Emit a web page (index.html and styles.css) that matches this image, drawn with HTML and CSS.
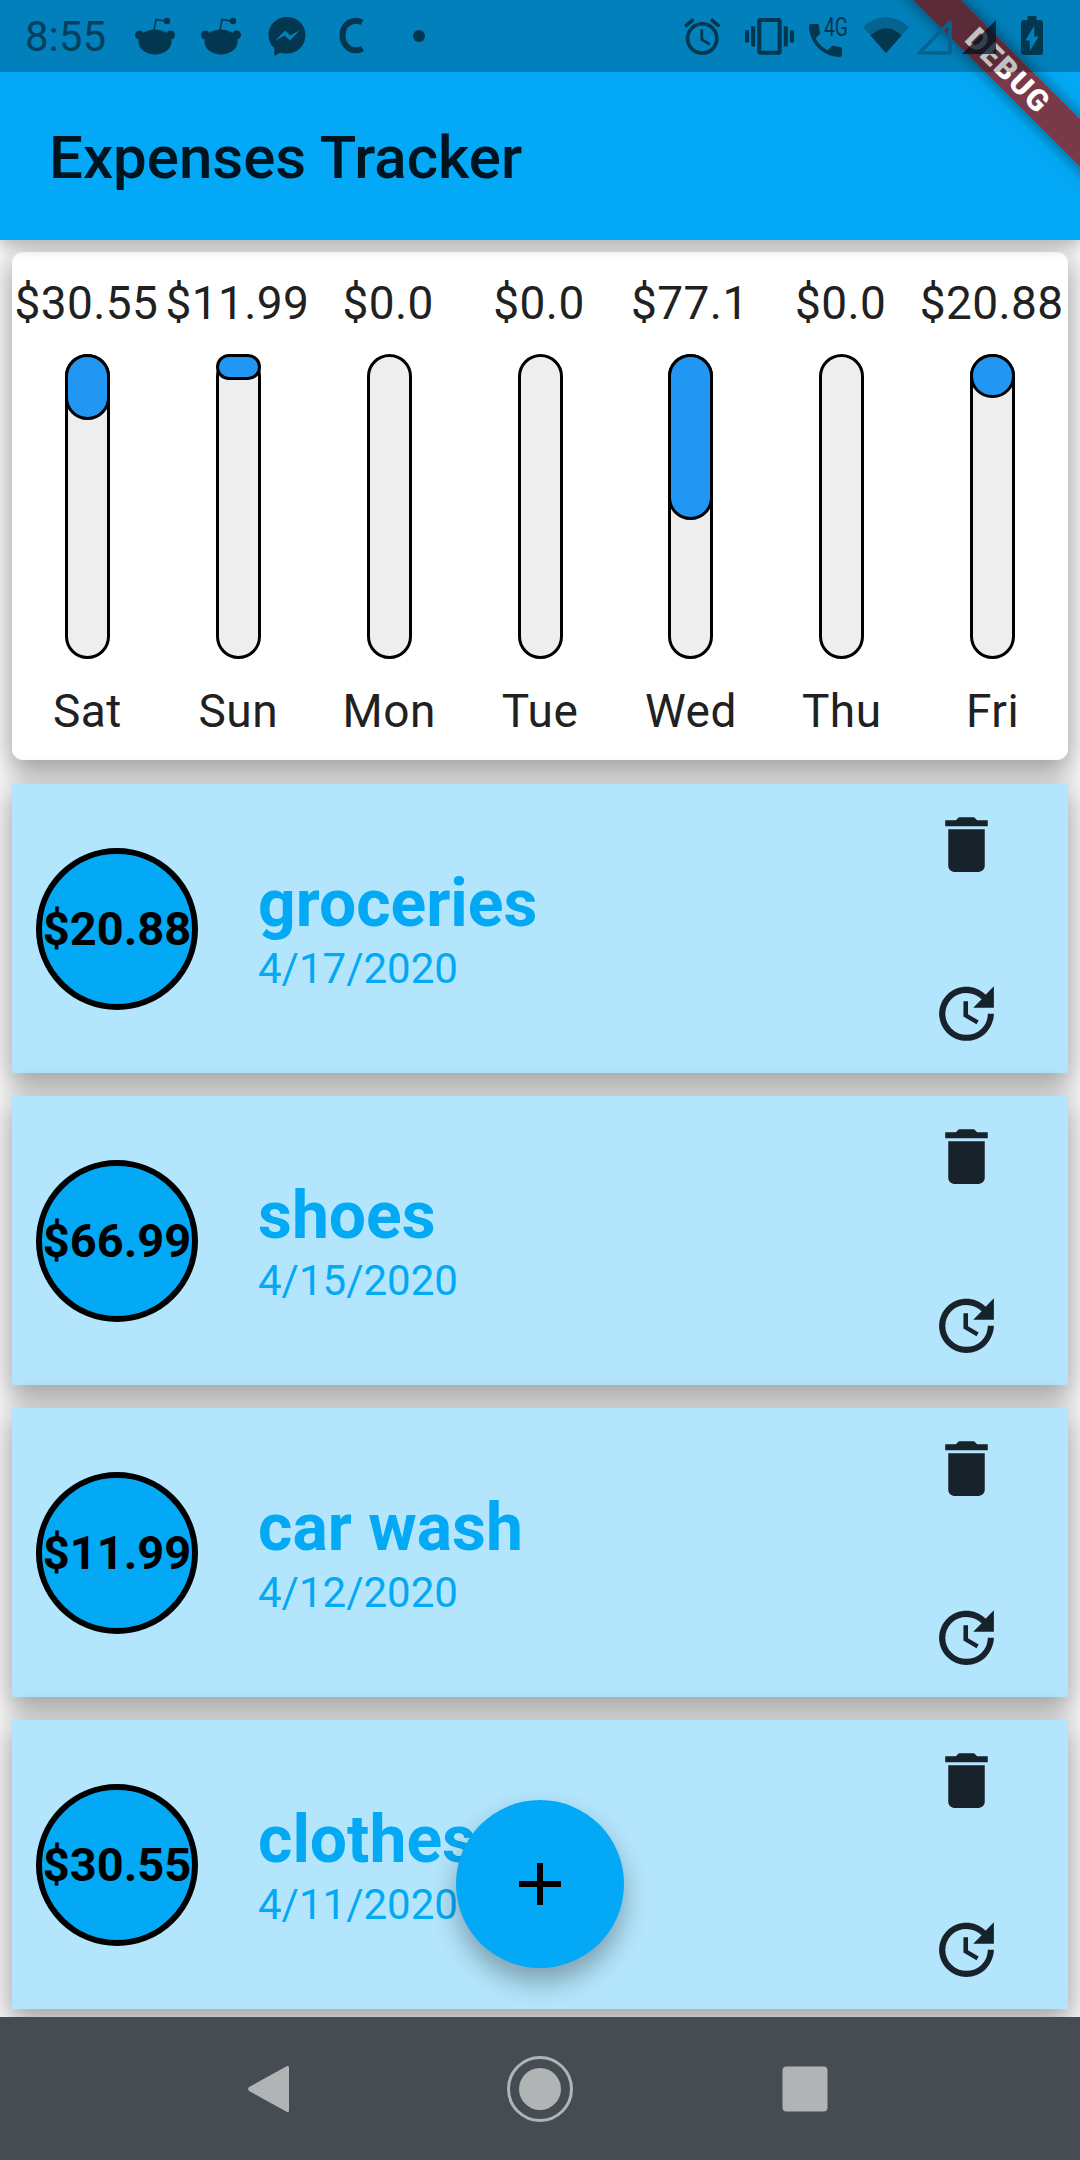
FILE: index.html
```html
<!DOCTYPE html>
<html>
	<head>
		<meta charset="utf-8">
		<meta name="viewport" content="width = device-width, initial-scale = 1.0">
		<title>Expenses Tracker</title>
		<link rel="stylesheet" href="styles.css">
	</head>
	<body>
		<svg class="icon-defs" width="0" height="0">
			<symbol id="icon-delete" viewBox="0 0 24 24">
				<path d="M6 19c0 1.1.9 2 2 2h8c1.1 0 2-.9 2-2V7H6v12zM19 4h-3.5l-1-1h-5l-1 1H5v2h14V4z"></path>
			</symbol>
			<symbol id="icon-update" viewBox="0 0 24 24">
				<path d="M21 10.12h-6.78l2.74-2.82c-2.73-2.7-7.15-2.8-9.88-.1-2.73 2.71-2.73 7.08 0 9.79s7.15 2.71 9.88 0C18.32 15.65 19 14.08 19 12.1h2c0 1.98-.88 4.55-2.64 6.29-3.51 3.48-9.21 3.48-12.72 0-3.5-3.47-3.53-9.11-.02-12.58s9.14-3.47 12.65 0L21 3v7.12zM12.5 8v4.25l3.5 2.08-.72 1.21L11 13V8h1.5z"></path>
			</symbol>
			<symbol id="icon-reddit" viewBox="0 0 40 40">
				<circle cx="4.500" cy="19" r="4.500"></circle>
				<circle cx="35.500" cy="19" r="4.500"></circle>
				<ellipse cx="20" cy="26" rx="16.500" ry="12.500"></ellipse>
				<path d="M19 14l2-10.500 9 1.500" fill="none" stroke="#03374f" stroke-width="1.600"></path>
				<circle cx="32" cy="5" r="3.200"></circle>
			</symbol>
		</svg>
		<div class="screen">
			<div class="debug-banner"><span class="debug-banner__text">DEBUG</span></div>
			<header class="app-bar">
				<div class="status-bar">
					<span class="status-bar__time">8:55</span>
					<svg class="status-slot"><use href="#icon-reddit"></use></svg>
					<svg class="status-slot"><use href="#icon-reddit"></use></svg>
					<svg class="status-slot" viewBox="0 0 40 40">
						<path d="M20 1C9.500 1 1.500 8.700 1.500 19c0 5.400 2.200 10 5.800 13.200V40l6-3.300c2.100.6 4.300.9 6.700.9 10.500 0 18.500-7.900 18.500-18.500S30.500 1 20 1z"></path>
						<path d="M8 25l10-10.500 5.500 5 9.500-5.500-10 10.500-5.500-5z" fill="#0280b8"></path>
					</svg>
					<svg class="status-slot" viewBox="0 0 40 40">
						<path d="M29 6.500C26 4.800 23 4.500 20 5.200 13.500 6.500 9.500 12 9.500 19.500S14 32.500 20 34c3.500.8 6.500.3 9.500-1.500" fill="none" stroke="#03374f" stroke-width="6"></path>
					</svg>
					<svg class="status-slot" viewBox="0 0 40 40"><circle cx="20" cy="20" r="6"></circle></svg>
					<svg class="status-bar__right" viewBox="680 0 400 72">
						<path transform="translate(680.300 14.600) scale(1.830)" d="M22 5.720l-4.600-3.860-1.290 1.530 4.600 3.860L22 5.720zM7.880 3.390L6.600 1.860 2 5.710l1.290 1.530 4.590-3.850zM12.500 8H11v6l4.750 2.850.75-1.230-4-2.370V8zM12 4c-4.970 0-9 4.030-9 9s4.020 9 9 9c4.970 0 9-4.030 9-9s-4.030-9-9-9zm0 16c-3.870 0-7-3.130-7-7s3.130-7 7-7 7 3.130 7 7-3.130 7-7 7z"></path>
						<path transform="translate(745 11.900) scale(2.040)" d="M0 15h2V9H0v6zm3 2h2V7H3v10zm19-8v6h2V9h-2zm-3 8h2V7h-2v10zM16.500 3h-9C6.670 3 6 3.670 6 4.500v15c0 .83.67 1.500 1.500 1.500h9c.83 0 1.500-.67 1.500-1.500v-15c0-.83-.67-1.500-1.500-1.500zM16 19H8V5h8v14z"></path>
						<path transform="translate(803.500 18.500) scale(1.830)" d="M6.620 10.790c1.440 2.830 3.760 5.140 6.590 6.590l2.200-2.200c.27-.27.67-.36 1.020-.24 1.120.37 2.330.57 3.570.57.550 0 1 .45 1 1V20c0 .55-.45 1-1 1-9.390 0-17-7.610-17-17 0-.55.45-1 1-1h3.500c.55 0 1 .45 1 1 0 1.250.2 2.450.57 3.570.11.35.03.74-.25 1.020l-2.200 2.200z"></path>
						<text class="status-bar__net" x="824" y="36" textLength="24" lengthAdjust="spacingAndGlyphs">4G</text>
						<path class="status-bar__dim" d="M863 27Q886 7 909 27L886 53Z"></path>
						<path d="M870.500 35.500Q886 21 901.500 35.500L886 53Z"></path>
						<path class="status-bar__dim-line" d="M950 22V53H919Z"></path>
						<path class="status-bar__over" d="M996 20V54H962Z"></path>
						<path transform="translate(1005.600 12.100) scale(2.200 1.950)" d="M15.670 4H14V2h-4v2H8.330C7.600 4 7 4.600 7 5.330v15.330C7 21.400 7.600 22 8.330 22h7.330c.74 0 1.340-.6 1.340-1.330V5.330C17 4.600 16.400 4 15.670 4zM11 20v-5.500H9L13 7v5.500h2L11 20z"></path>
					</svg>
				</div>
				<h1 class="app-bar__title">Expenses Tracker</h1>
			</header>

			<main class="content">
				<section class="chart">
					<div class="chart__col">
						<div class="chart__value">$30.55</div>
						<div class="bar"><div class="bar__track"></div><div class="bar__fill" style="height: 66px;"></div></div>
						<div class="chart__day">Sat</div>
					</div>
					<div class="chart__col">
						<div class="chart__value">$11.99</div>
						<div class="bar"><div class="bar__track"></div><div class="bar__fill" style="height: 26px;"></div></div>
						<div class="chart__day">Sun</div>
					</div>
					<div class="chart__col">
						<div class="chart__value">$0.0</div>
						<div class="bar"><div class="bar__track"></div></div>
						<div class="chart__day">Mon</div>
					</div>
					<div class="chart__col">
						<div class="chart__value">$0.0</div>
						<div class="bar"><div class="bar__track"></div></div>
						<div class="chart__day">Tue</div>
					</div>
					<div class="chart__col">
						<div class="chart__value">$77.1</div>
						<div class="bar"><div class="bar__track"></div><div class="bar__fill" style="height: 166px;"></div></div>
						<div class="chart__day">Wed</div>
					</div>
					<div class="chart__col">
						<div class="chart__value">$0.0</div>
						<div class="bar"><div class="bar__track"></div></div>
						<div class="chart__day">Thu</div>
					</div>
					<div class="chart__col">
						<div class="chart__value">$20.88</div>
						<div class="bar"><div class="bar__track"></div><div class="bar__fill" style="height: 44px;"></div></div>
						<div class="chart__day">Fri</div>
					</div>
				</section>

				<section class="expense-list">
					<article class="expense">
						<div class="expense__amount">$20.88</div>
						<div class="expense__info">
							<div class="expense__title">groceries</div>
							<div class="expense__date">4/17/2020</div>
						</div>
						<div class="expense__actions">
							<svg class="expense__icon"><use href="#icon-delete"></use></svg>
							<svg class="expense__icon"><use href="#icon-update"></use></svg>
						</div>
					</article>
					<article class="expense">
						<div class="expense__amount">$66.99</div>
						<div class="expense__info">
							<div class="expense__title">shoes</div>
							<div class="expense__date">4/15/2020</div>
						</div>
						<div class="expense__actions">
							<svg class="expense__icon"><use href="#icon-delete"></use></svg>
							<svg class="expense__icon"><use href="#icon-update"></use></svg>
						</div>
					</article>
					<article class="expense">
						<div class="expense__amount">$11.99</div>
						<div class="expense__info">
							<div class="expense__title">car wash</div>
							<div class="expense__date">4/12/2020</div>
						</div>
						<div class="expense__actions">
							<svg class="expense__icon"><use href="#icon-delete"></use></svg>
							<svg class="expense__icon"><use href="#icon-update"></use></svg>
						</div>
					</article>
					<article class="expense">
						<div class="expense__amount">$30.55</div>
						<div class="expense__info">
							<div class="expense__title">clothes</div>
							<div class="expense__date">4/11/2020</div>
						</div>
						<div class="expense__actions">
							<svg class="expense__icon"><use href="#icon-delete"></use></svg>
							<svg class="expense__icon"><use href="#icon-update"></use></svg>
						</div>
					</article>
				</section>
			</main>

			<button class="fab">
				<svg class="fab__icon" viewBox="0 0 24 24"><path d="M19 13h-6v6h-2v-6H5v-2h6V5h2v6h6v2z"></path></svg>
			</button>

			<nav class="nav-bar">
				<svg class="nav-bar__icon" viewBox="0 0 66 66">
					<path d="M47 11.500c0-1.500-1.200-2-2.400-1.200L7.500 30.700c-1.800 1-1.800 3.600 0 4.600l37.100 20.400c1.200.8 2.400.3 2.400-1.200z"></path>
				</svg>
				<svg class="nav-bar__icon" viewBox="0 0 66 66">
					<circle cx="33" cy="33" r="31.500" fill="none" stroke="#b0b4b5" stroke-width="3"></circle>
					<circle cx="33" cy="33" r="21"></circle>
				</svg>
				<svg class="nav-bar__icon" viewBox="0 0 66 66">
					<rect x="10.500" y="10.500" width="45" height="45" rx="4"></rect>
				</svg>
			</nav>
		</div>
	</body>
</html>
```

FILE: styles.css
```css
body {
	margin: 0;
	font-family: Roboto, "Liberation Sans", sans-serif;
}
.icon-defs {
	position: absolute;
}
.screen {
	position: relative;
	width: 1080px;
	height: 2160px;
	display: flex;
	flex-direction: column;
	overflow: hidden;
	background: #fafafa;
}
/* sits under the status bar scrim, above the app bar */
.debug-banner {
	position: absolute;
	left: 838px;
	top: 54px;
	z-index: 2;
	width: 340px;
	height: 34px;
	display: flex;
	align-items: center;
	justify-content: center;
	transform: rotate(45deg);
	background: rgba(150, 30, 30, 0.8);
	box-shadow: 0 0 16px rgba(0, 0, 0, 0.5);
}
.debug-banner__text {
	color: #fff;
	font-size: 30px;
	font-weight: 900;
	letter-spacing: 2px;
	line-height: 1;
}
.app-bar {
	position: relative;
	height: 240px;
	flex: none;
	background: #03a9f6;
	box-shadow: 0 6px 14px rgba(0, 0, 0, 0.25);
}
.app-bar__title {
	margin: 0;
	padding: 2px 0 0 49px;
	height: 168px;
	line-height: 168px;
	font-size: 60px;
	font-weight: 500;
	color: #00141f;
}
.status-bar {
	position: relative;
	z-index: 3;
	height: 72px;
	display: flex;
	align-items: center;
	padding-left: 25px;
	background: rgba(0, 0, 0, 0.24);
	fill: #03374f;
}
.status-bar__time {
	width: 110px;
	font-size: 42px;
	color: #03405f;
}
.status-slot {
	width: 40px;
	height: 40px;
	margin-right: 26px;
}
.status-bar__right {
	position: absolute;
	right: 0;
	top: 0;
	width: 400px;
	height: 72px;
}
.status-bar__net {
	font-size: 25px;
	font-family: Roboto, sans-serif;
}
.status-bar__dim {
	fill: #02648f;
}
.status-bar__dim-line {
	fill: none;
	stroke: #02648f;
	stroke-width: 3.5;
	stroke-linejoin: round;
}
.status-bar__over {
	fill: rgba(0, 15, 30, 0.72);
}
.content {
	flex: 1;
	display: flex;
	flex-direction: column;
	gap: 24px;
	padding: 12px 12px 0;
	overflow: hidden;
}
.chart {
	height: 508px;
	flex: none;
	display: flex;
	box-sizing: border-box;
	border-radius: 11px;
	background: #fff;
	box-shadow: 0 14px 24px rgba(0, 0, 0, 0.25), 0 0 28px 6px rgba(0, 0, 0, 0.14);
}
.chart__col {
	flex: 1;
	min-width: 0;
	display: flex;
	flex-direction: column;
	align-items: center;
	padding-top: 25px;
	color: #212121;
}
.chart__value {
	height: 52px;
	line-height: 52px;
	font-size: 46px;
	letter-spacing: 0.4px;
	margin-right: 2px;
	white-space: nowrap;
}
.bar {
	display: grid;
	width: 45px;
	height: 305px;
	margin: 25px 0 26px;
}
.bar__track,
.bar__fill {
	grid-area: 1 / 1;
	box-sizing: border-box;
	border: 3px solid #000;
	border-radius: 23px;
}
.bar__track {
	background: #eee;
}
.bar__fill {
	align-self: start;
	background: #2196f3;
}
.chart__day {
	height: 52px;
	line-height: 52px;
	font-size: 46px;
	letter-spacing: 0.5px;
}
.expense-list {
	display: flex;
	flex-direction: column;
	gap: 23px;
}
.expense {
	height: 289px;
	flex: none;
	display: flex;
	align-items: center;
	padding: 0 0 0 24px;
	background: #b3e5fc;
	box-shadow: 0 14px 24px rgba(0, 0, 0, 0.25), 0 0 28px 6px rgba(0, 0, 0, 0.14);
}
.expense__amount {
	width: 162px;
	height: 162px;
	flex: none;
	box-sizing: border-box;
	display: flex;
	align-items: center;
	justify-content: center;
	border: 6px solid #000;
	border-radius: 50%;
	background: #03a9f4;
	font-size: 47px;
	font-weight: 700;
	color: #000;
	white-space: nowrap;
}
.expense__info {
	flex: 1;
	margin: 12px 0 0 60px;
	color: #03a9f4;
}
.expense__title {
	font-size: 66px;
	font-weight: 700;
	line-height: 58px;
}
.expense__date {
	margin-top: 11px;
	font-size: 42px;
	line-height: 50px;
}
.expense__actions {
	width: 73px;
	margin-right: 65px;
	height: 100%;
	display: flex;
	flex-direction: column;
	justify-content: space-between;
	padding: 24px 0 23px;
	box-sizing: border-box;
}
.expense__icon {
	width: 73px;
	height: 73px;
	fill: #18222a;
}
.fab {
	position: absolute;
	left: 456px;
	top: 1800px;
	z-index: 1;
	width: 168px;
	height: 168px;
	padding: 0;
	display: flex;
	align-items: center;
	justify-content: center;
	border: none;
	border-radius: 50%;
	background: #03a9f6;
	box-shadow: 0 14px 26px rgba(0, 0, 0, 0.3);
}
.fab__icon {
	width: 72px;
	height: 72px;
	fill: #000;
}
.nav-bar {
	position: relative;
	z-index: 1;
	height: 143px;
	flex: none;
	display: flex;
	align-items: center;
	justify-content: center;
	gap: 199px;
	background: #454c52;
	fill: #b0b4b5;
}
.nav-bar__icon {
	width: 66px;
	height: 66px;
}
```
